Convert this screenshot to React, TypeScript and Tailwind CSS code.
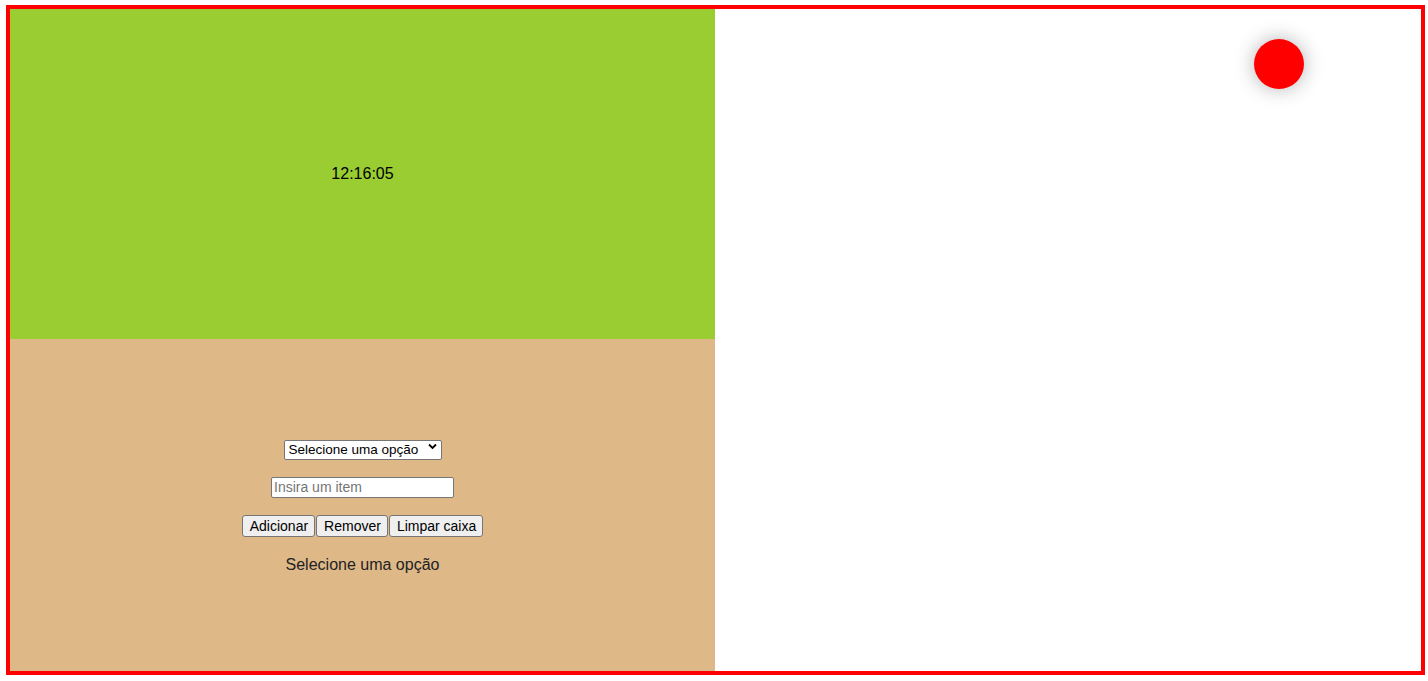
import React from "react";

export default function App() {
  return (
    <div className="w-[1428px] h-[681px] bg-white pl-[6px] pt-[5px]" style={{ fontFamily: '"Liberation Sans", Arial, sans-serif' }}>
      <div className="relative w-[1419px] h-[670px] border-[4px] border-[#ff0000] grid grid-cols-[705px_1fr] grid-rows-[330px_1fr]">
        <div className="bg-[#9acd32] flex items-center justify-center text-[16px] text-black">
          12:16:05
        </div>
        <div className="row-span-2 bg-white" />
        <div className="bg-[#deb887] flex flex-col items-center justify-center pt-[4px]">
          <div className="relative">
            <select
              className="appearance-none w-[158px] h-[20px] bg-white border border-[#767676] rounded-[2px] text-[13.5px] text-black pl-[4px] pr-[14px] leading-[18px] outline-none"
              defaultValue=""
            >
              <option value="">Selecione uma opção</option>
            </select>
            <svg
              className="absolute right-[5px] top-[6px] pointer-events-none"
              width="9"
              height="7"
              viewBox="0 0 9 7"
            >
              <path d="M1 1.5 L4.5 5 L8 1.5" fill="none" stroke="#000" strokeWidth="1.8" />
            </svg>
          </div>
          <input
            className="mt-[16px] w-[183px] h-[21px] bg-white border border-[#767676] rounded-[2px] text-[14px] text-black px-[2px] placeholder:text-[#757575] outline-none"
            placeholder="Insira um item"
          />
          <div className="mt-[17px] flex gap-[1px]">
            <button className="h-[22px] pl-[7px] pr-[6px] bg-[#efefef] border border-[#767676] rounded-[3px] text-[14px] text-black">Adicionar</button>
            <button className="h-[22px] pl-[7px] pr-[6px] bg-[#efefef] border border-[#767676] rounded-[3px] text-[14px] text-black">Remover</button>
            <button className="h-[22px] pl-[7px] pr-[6px] bg-[#efefef] border border-[#767676] rounded-[3px] text-[14px] text-black">Limpar caixa</button>
          </div>
          <p className="mt-[16px] text-[16px] leading-[24px] text-[#222]">Selecione uma opção</p>
        </div>
        <div className="absolute left-[1244px] top-[30px] w-[50px] h-[50px] rounded-full bg-[#ff0000] shadow-[0_0_20px_rgba(0,0,0,0.3)]" />
      </div>
    </div>
  );
}
